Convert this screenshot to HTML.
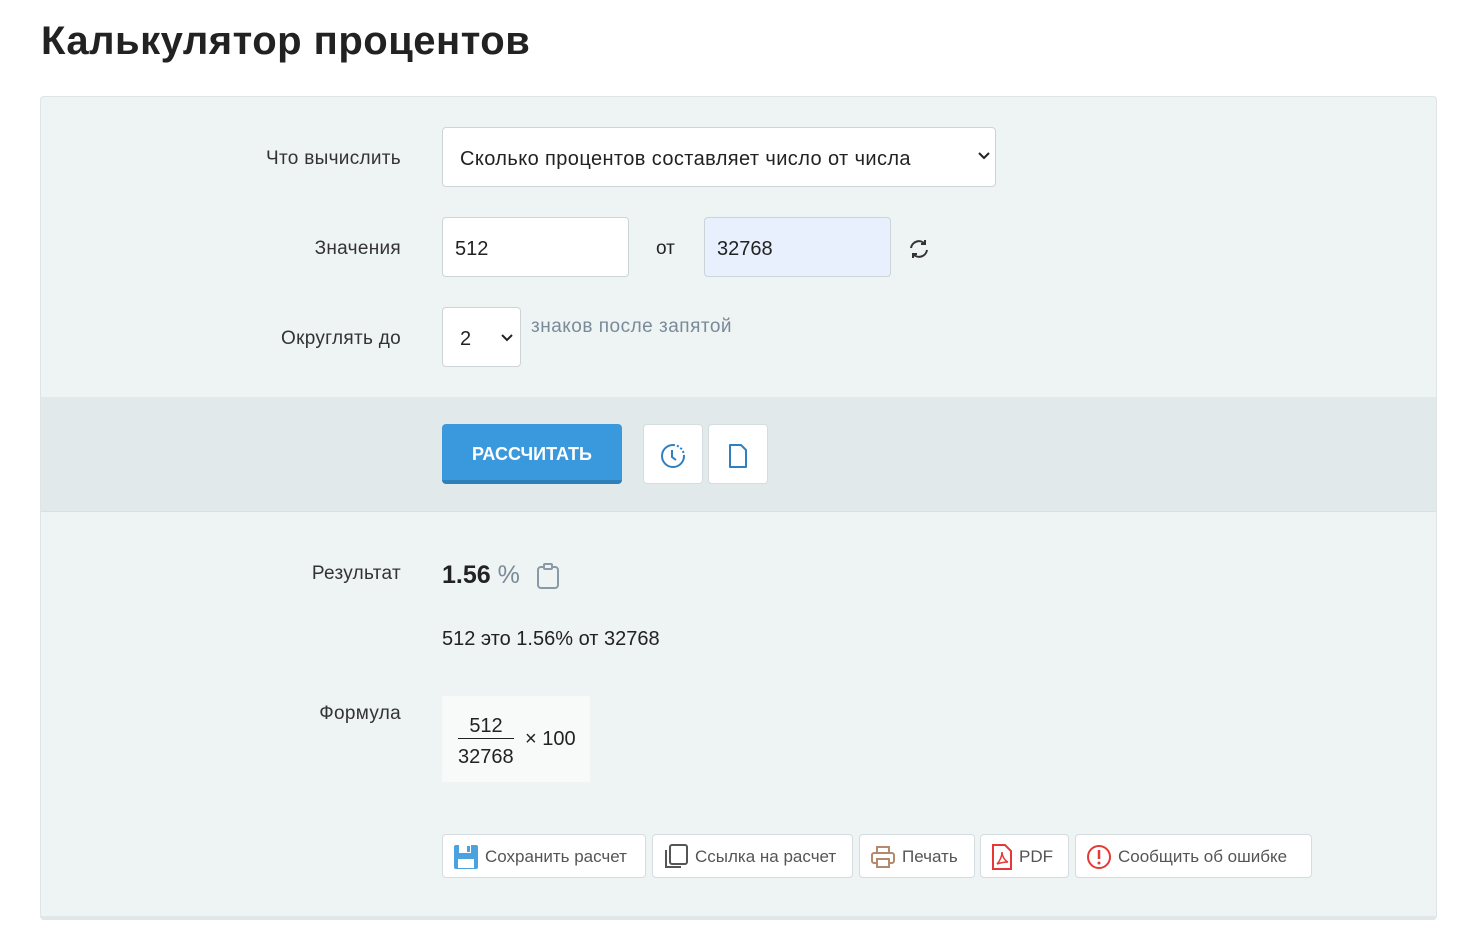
<!DOCTYPE html><html><head><meta charset="utf-8"><style>
body{margin:0;background:#fff;font-family:"Liberation Sans",sans-serif;color:#222;width:1464px;height:938px;position:relative;overflow:hidden}
.a{position:absolute}
h1{position:absolute;left:41px;top:19px;margin:0;font-size:40px;font-weight:bold;color:#222;letter-spacing:0.5px}
.panel{left:40px;top:96px;width:1395px;height:819px;background:#eef3f3;border:1px solid #dde5e5;border-bottom:4px solid #dfe7e8;border-radius:4px}
.bar{left:41px;top:397px;width:1395px;height:114px;background:#e2e9eb;border-bottom:1px solid #d8e0e2}
.lbl{width:360px;text-align:right;left:41px;font-size:19px;color:#333;letter-spacing:0.3px}
.inp{background:#fff;border:1px solid #cdd4d8;border-radius:4px;box-sizing:border-box;font-size:20px;color:#222;padding-left:17px;padding-top:4px;display:flex;align-items:center}
.btn{background:#fff;border:1px solid #d6dde0;border-radius:4px;box-sizing:border-box;display:flex;align-items:center;font-size:17px;color:#555;padding-left:10px;gap:6px;height:44px;top:834px;padding-top:2px}
</style></head><body>
<h1>Калькулятор процентов</h1>
<div class="a panel"></div>
<div class="a bar"></div>
<div class="a lbl" style="top:148px">Что вычислить</div>
<div class="a inp" style="left:442px;top:127px;width:554px;height:60px;letter-spacing:0.4px">Сколько процентов составляет число от числа
<svg class="a" style="left:534px;top:23px" width="14" height="10"><path d="M2 2l5 5 5-5" stroke="#222" stroke-width="2" fill="none"/></svg></div>
<div class="a lbl" style="top:238px">Значения</div>
<div class="a inp" style="left:442px;top:217px;width:187px;height:60px;padding-left:12px">512</div>
<div class="a" style="left:656px;top:238px;font-size:19px">от</div>
<div class="a inp" style="left:704px;top:217px;width:187px;height:60px;padding-left:12px;background:#e8f0fe">32768</div>
<svg class="a" style="left:907px;top:237px" width="24" height="24" viewBox="0 0 24 24"><path d="M4 11a8 8 0 0 1 14-4M20 13a8 8 0 0 1-14 4" stroke="#333" stroke-width="2" fill="none"/><path d="M18 3v4h-4M6 21v-4h4" stroke="#333" stroke-width="2" fill="none"/></svg>
<div class="a lbl" style="top:328px">Округлять до</div>
<div class="a inp" style="left:442px;top:307px;width:79px;height:60px">2
<svg class="a" style="left:57px;top:25px" width="14" height="10"><path d="M2 2l5 5 5-5" stroke="#222" stroke-width="2" fill="none"/></svg></div>
<div class="a" style="left:531px;top:316px;font-size:19px;color:#7a8a99;letter-spacing:0.5px">знаков после запятой</div>
<div class="a" style="left:442px;top:424px;width:180px;height:60px;background:#3a99dc;border-bottom:4px solid #2f7fb8;border-radius:4px;box-sizing:border-box;color:#fff;font-weight:bold;font-size:18px;display:flex;align-items:center;justify-content:center;padding-top:4px">РАССЧИТАТЬ</div>
<div class="a" style="left:643px;top:424px;width:60px;height:60px;background:#fff;border:1px solid #d6dde0;border-radius:4px;box-sizing:border-box"><svg class="a" style="left:16px;top:18px" width="26" height="26" viewBox="0 0 26 26"><path d="M13 2a11 11 0 1 0 11 11" stroke="#2f80c0" stroke-width="2" fill="none"/><path d="M13 2a11 11 0 0 1 11 11" stroke="#2f80c0" stroke-width="2" fill="none" stroke-dasharray="2 2"/><path d="M12 7v7l4 3" stroke="#2f80c0" stroke-width="2" fill="none"/></svg></div>
<div class="a" style="left:708px;top:424px;width:60px;height:60px;background:#fff;border:1px solid #d6dde0;border-radius:4px;box-sizing:border-box"><svg class="a" style="left:19px;top:18px" width="20" height="26" viewBox="0 0 20 26"><path d="M2 2h11l5 5v17H2z" stroke="#2f80c0" stroke-width="2" fill="none" stroke-linejoin="round"/></svg></div>
<div class="a lbl" style="top:563px">Результат</div>
<div class="a" style="left:442px;top:561px;font-size:25px"><b>1.56</b> <span style="color:#7a8a99">%</span></div>
<svg class="a" style="left:536px;top:563px" width="24" height="26" viewBox="0 0 24 26"><rect x="2" y="4" width="20" height="21" rx="3" stroke="#8a99a6" stroke-width="2" fill="none"/><rect x="8" y="1" width="8" height="5" rx="1" stroke="#8a99a6" stroke-width="2" fill="#eef3f3"/></svg>
<div class="a" style="left:442px;top:628px;font-size:20px">512 это 1.56% от 32768</div>
<div class="a lbl" style="top:703px">Формула</div>
<div class="a" style="left:442px;top:696px;width:148px;height:86px;background:#f8fafa"></div>
<div class="a" style="left:458px;top:714px;width:56px;text-align:center;font-size:20px;border-bottom:1px solid #222;line-height:24px">512</div>
<div class="a" style="left:458px;top:746px;font-size:20px">32768</div>
<div class="a" style="left:525px;top:728px;font-size:20px">× 100</div>
<div class="a btn" style="left:442px;width:204px"><svg width="26" height="26" viewBox="0 0 26 26"><rect x="1" y="1" width="24" height="24" rx="2" fill="#4aa3df"/><rect x="5" y="15" width="16" height="9" fill="#fff"/><rect x="6" y="1" width="12" height="8" fill="#fff"/><rect x="14" y="2" width="3" height="6" fill="#4aa3df"/></svg>Сохранить расчет</div>
<div class="a btn" style="left:652px;width:201px"><svg width="26" height="26" viewBox="0 0 26 26"><rect x="7" y="1" width="17" height="19" rx="2" stroke="#555" stroke-width="2" fill="none"/><path d="M3 6v17h15" stroke="#555" stroke-width="2" fill="none"/></svg>Ссылка на расчет</div>
<div class="a btn" style="left:859px;width:116px"><svg width="26" height="24" viewBox="0 0 26 24"><rect x="7" y="2" width="12" height="6" stroke="#b48a6e" stroke-width="2" fill="none"/><rect x="2" y="8" width="22" height="10" rx="2" stroke="#b48a6e" stroke-width="2" fill="none"/><rect x="7" y="14" width="12" height="8" stroke="#b48a6e" stroke-width="2" fill="#fff"/></svg>Печать</div>
<div class="a btn" style="left:980px;width:89px"><svg width="22" height="26" viewBox="0 0 22 26"><path d="M2 1h12l6 6v18H2z" stroke="#e53935" stroke-width="2" fill="none"/><path d="M6 20c3-3 5-8 5-12 0 4 3 9 6 10-4 0-8 1-11 2" stroke="#e53935" stroke-width="1.5" fill="none"/></svg>PDF</div>
<div class="a btn" style="left:1075px;width:237px"><svg width="26" height="26" viewBox="0 0 26 26"><circle cx="13" cy="13" r="11" stroke="#e53935" stroke-width="2" fill="none"/><path d="M13 6v9" stroke="#e53935" stroke-width="2.5"/><circle cx="13" cy="19" r="1.5" fill="#e53935"/></svg>Сообщить об ошибке</div>
</body></html>
